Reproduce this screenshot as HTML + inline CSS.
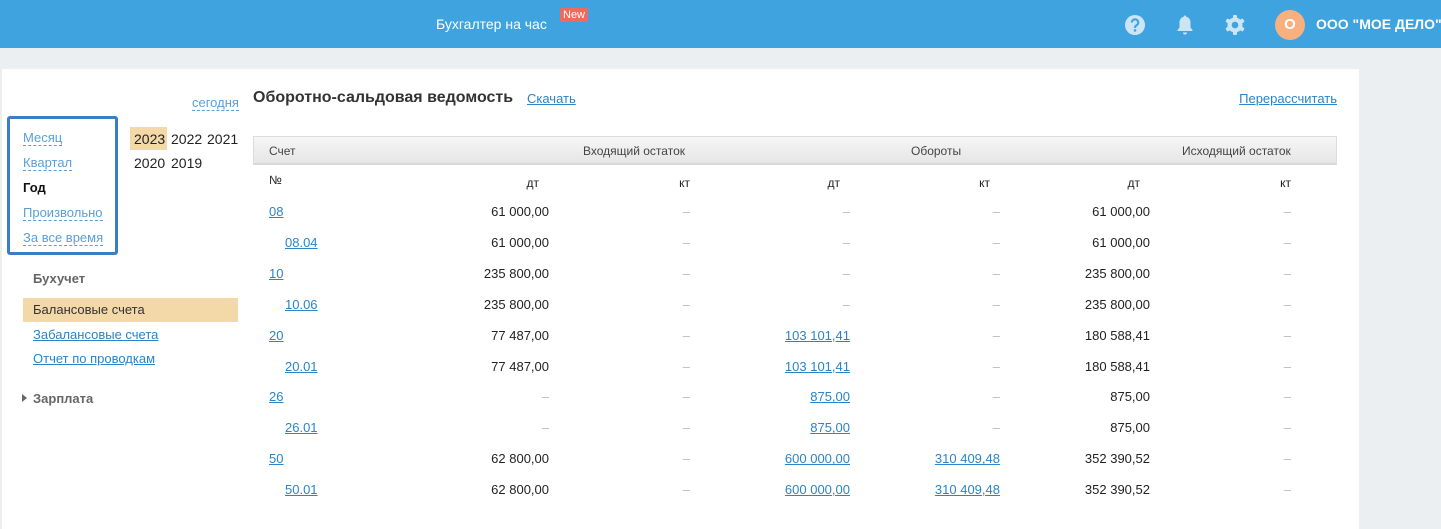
<!DOCTYPE html>
<html><head><meta charset="utf-8"><style>
*{margin:0;padding:0;box-sizing:border-box}
body{width:1441px;height:512px;overflow:hidden;background:#eceff1;font-family:"Liberation Sans",Arial,sans-serif;font-size:13px;color:#222;position:relative}
.a{position:absolute;white-space:nowrap}
.hdr{position:absolute;left:0;top:0;width:1441px;height:48px;background:#3fa3df}
.panel{position:absolute;left:2px;top:69px;width:1357px;height:460px;background:#fff}
a{color:#2a84c8;text-decoration:underline}
.dl{color:#5a9fd8;border-bottom:1px dashed #5a9fd8;text-decoration:none}
.r{text-align:right}
.d{color:#bbb}
</style></head><body>
<div class="hdr">
 <div class="a" style="left:436px;top:16px;color:#fff;font-size:14px">Бухгалтер на час</div>
 <div class="a" style="left:560px;top:8px;background:#ee6a5b;color:#fff;font-size:11px;padding:1px 3px;border-radius:2px">New</div>
 <svg class="a" style="left:1124px;top:14px" width="22" height="22" viewBox="0 0 22 22"><circle cx="11" cy="11" r="10" fill="#cbe5f7"/><path d="M7.8 8.5a3.2 3.2 0 1 1 4.6 2.9c-.9.5-1.4 1-1.4 2v.5" stroke="#3fa3df" stroke-width="2.2" fill="none"/><circle cx="11" cy="16.4" r="1.3" fill="#3fa3df"/></svg>
 <svg class="a" style="left:1175px;top:14px" width="20" height="22" viewBox="0 0 20 22"><path d="M10 1.5c.9 0 1.3.6 1.3 1.2C14 3.4 15.5 5.6 15.5 8.5v5l2 2.5v1H2.5v-1l2-2.5v-5c0-2.9 1.5-5.1 4.2-5.8 0-.6.4-1.2 1.3-1.2z" fill="#cbe5f7"/><path d="M8 18.5h4a2 2 0 0 1-4 0z" fill="#cbe5f7"/></svg>
 <svg class="a" style="left:1224px;top:14px" width="22" height="22" viewBox="0 0 22 22"><g fill="#cbe5f7"><circle cx="11" cy="11" r="7.5"/><rect x="9" y="1" width="4" height="20" rx="1"/><rect x="9" y="1" width="4" height="20" rx="1" transform="rotate(60 11 11)"/><rect x="9" y="1" width="4" height="20" rx="1" transform="rotate(120 11 11)"/></g><circle cx="11" cy="11" r="3.3" fill="#3fa3df"/></svg>
 <div class="a" style="left:1275px;top:10px;width:30px;height:30px;border-radius:50%;background:#f9b07f;color:#fff;font-weight:bold;font-size:15px;text-align:center;line-height:30px">О</div>
 <div class="a" style="left:1316px;top:16px;color:#fff;font-size:14px;font-weight:bold">ООО "МОЕ ДЕЛО"</div>
</div>
<div class="panel"></div>
<div class="a" style="left:192px;top:95px"><span class="dl">сегодня</span></div>
<div class="a" style="left:7px;top:116px;width:111px;height:139px;border:3px solid #3a7ec4;border-radius:3px"></div>
<div class="a" style="left:23px;top:130px;font-size:13px"><span class="dl">Месяц</span></div>
<div class="a" style="left:23px;top:155px;font-size:13px"><span class="dl">Квартал</span></div>
<div class="a" style="left:23px;top:180px;font-size:13px;font-weight:bold;color:#111">Год</div>
<div class="a" style="left:23px;top:205px;font-size:13px"><span class="dl">Произвольно</span></div>
<div class="a" style="left:23px;top:230px;font-size:13px"><span class="dl">За все время</span></div>
<div class="a" style="left:130px;top:127px;width:37px;height:23px;background:#f3d8a8"></div>
<div class="a" style="left:134px;top:131px;font-size:14px">2023</div>
<div class="a" style="left:171px;top:131px;font-size:14px">2022</div>
<div class="a" style="left:207px;top:131px;font-size:14px">2021</div>
<div class="a" style="left:134px;top:155px;font-size:14px">2020</div>
<div class="a" style="left:171px;top:155px;font-size:14px">2019</div>
<div class="a" style="left:33px;top:271px;font-weight:bold;color:#666">Бухучет</div>
<div class="a" style="left:23px;top:298px;width:215px;height:24px;background:#f3d8a8"></div>
<div class="a" style="left:33px;top:302px;color:#333">Балансовые счета</div>
<div class="a" style="left:33px;top:327px"><a>Забалансовые счета</a></div>
<div class="a" style="left:33px;top:351px"><a>Отчет по проводкам</a></div>
<div class="a" style="left:22px;top:394px;width:0;height:0;border-left:5px solid #666;border-top:4px solid transparent;border-bottom:4px solid transparent"></div>
<div class="a" style="left:33px;top:391px;font-weight:bold;color:#666">Зарплата</div>
<div class="a" style="left:253px;top:89px;font-size:16px;font-weight:bold;color:#333">Оборотно-сальдовая ведомость</div>
<div class="a" style="left:527px;top:91px"><a>Скачать</a></div>
<div class="a r" style="left:1137px;width:200px;top:91px"><a>Перерассчитать</a></div>
<div class="a" style="left:253px;top:136px;width:1084px;height:29px;background:linear-gradient(#f6f6f6,#e6e6e6);border:1px solid #ddd;border-bottom:2px solid #d8d8d8"></div>
<div class="a" style="left:269px;top:144px;font-size:12px;color:#444">Счет</div>
<div class="a" style="left:583px;top:144px;font-size:12px;color:#444">Входящий остаток</div>
<div class="a" style="left:911px;top:144px;font-size:12px;color:#444">Обороты</div>
<div class="a" style="left:1182px;top:144px;font-size:12px;color:#444">Исходящий остаток</div>
<div class="a" style="left:269px;top:173px;font-size:12px">№</div>
<div class="a r" style="left:449px;width:90px;top:176px;font-size:12px">дт</div>
<div class="a r" style="left:600px;width:90px;top:176px;font-size:12px">кт</div>
<div class="a r" style="left:750px;width:90px;top:176px;font-size:12px">дт</div>
<div class="a r" style="left:900px;width:90px;top:176px;font-size:12px">кт</div>
<div class="a r" style="left:1050px;width:90px;top:176px;font-size:12px">дт</div>
<div class="a r" style="left:1201px;width:90px;top:176px;font-size:12px">кт</div>
<div id="rows"></div>
<script>
var R=[["08",0,"61 000,00","","","","61 000,00",""],["08.04",1,"61 000,00","","","","61 000,00",""],["10",0,"235 800,00","","","","235 800,00",""],["10.06",1,"235 800,00","","","","235 800,00",""],["20",0,"77 487,00","","103 101,41","","180 588,41",""],["20.01",1,"77 487,00","","103 101,41","","180 588,41",""],["26",0,"","","875,00","","875,00",""],["26.01",1,"","","875,00","","875,00",""],["50",0,"62 800,00","","600 000,00","310 409,48","352 390,52",""],["50.01",1,"62 800,00","","600 000,00","310 409,48","352 390,52",""]];
var rights=[549,690,850,1000,1150,1291],h="";
R.forEach(function(r,i){var y=204+i*30.9;
h+='<div class="a" style="left:'+(r[1]?285:269)+'px;top:'+y+'px"><a>'+r[0]+'</a></div>';
for(var c=0;c<6;c++){var v=r[c+2],t;
if(!v)t='<span class="d">–</span>';else if(c==2||c==3)t='<a>'+v+'</a>';else t=v;
h+='<div class="a r" style="left:'+(rights[c]-140)+'px;width:140px;top:'+y+'px">'+t+'</div>';}});
document.getElementById('rows').innerHTML=h;
</script>
</body></html>
